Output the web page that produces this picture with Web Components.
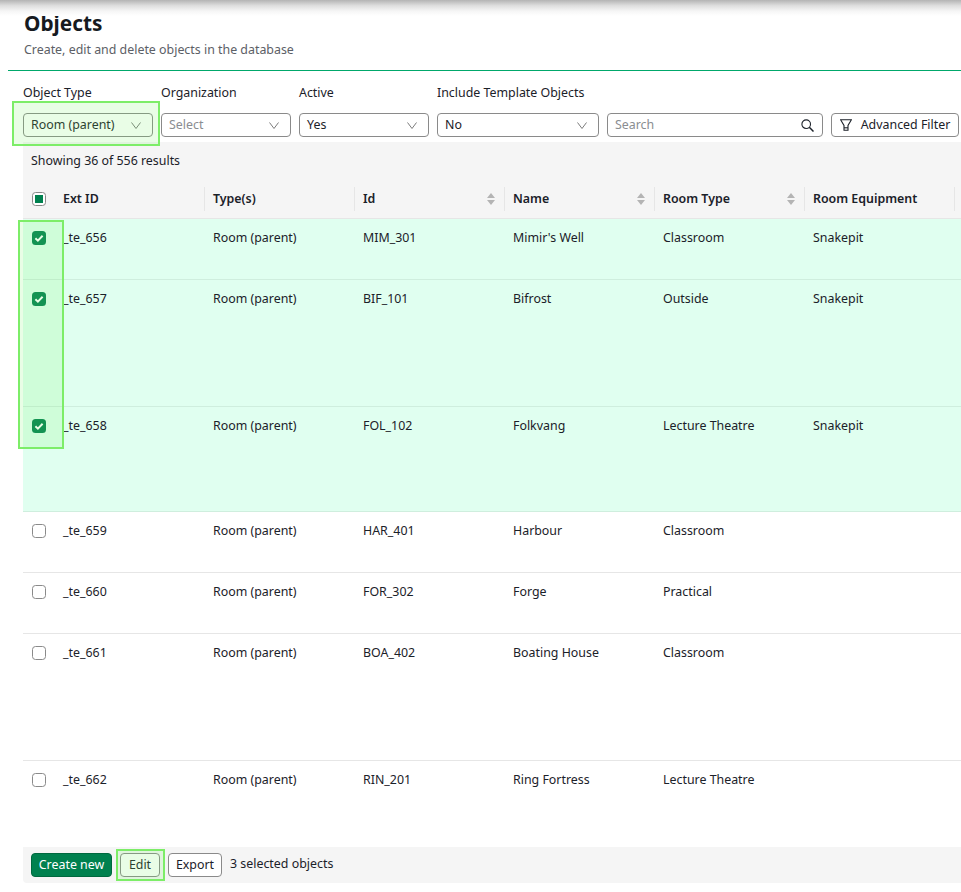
<!DOCTYPE html>
<html>
<head>
<meta charset="utf-8">
<title>Objects</title>
<style>
  html, body { margin: 0; padding: 0; background: #fff; }
  body { width: 961px; height: 892px; overflow: hidden; font: 12.4px/18px "Noto Sans", sans-serif; color: #1b2129; }
</style>
</head>
<body>
<objects-page></objects-page>
<script>
const chevron = `<svg width="10" height="7" viewBox="0 0 10 7" fill="none"><path d="M.5 .5l4.5 6 4.5-6" stroke="#7d7d7d" stroke-width="1"/></svg>`;

class PageHeader extends HTMLElement {
  constructor() {
    super();
    this.attachShadow({mode: 'open'});
    this.shadowRoot.innerHTML = `
      <style>
        :host { display: block; margin-left: 8px; height: 71px; box-sizing: border-box; border-bottom: 1px solid #00a86b; padding: 8px 0 0 16px; }
        h1 { margin: 0; font-size: 20.8px; line-height: 30px; font-weight: 700; color: #161a1f; }
        p { margin: 3px 0 0; line-height: 18px; color: #5c6066; }
      </style>
      <h1><slot name="title"></slot></h1>
      <p><slot name="sub"></slot></p>`;
  }
}
customElements.define('page-header', PageHeader);

class FilterSelect extends HTMLElement {
  constructor() {
    super();
    this.attachShadow({mode: 'open'});
  }
  connectedCallback() {
    const label = this.getAttribute('label');
    const placeholder = this.hasAttribute('placeholder');
    this.shadowRoot.innerHTML = `
      <style>
        :host { display: block; flex: none; width: var(--w, 130px); }
        label { display: block; height: 18px; line-height: 18px; margin-bottom: 11px; white-space: nowrap; }
        .box { height: 24px; box-sizing: border-box; border: 1px solid #8a8a8a; border-radius: 4px; background: #fff; display: flex; align-items: center; justify-content: space-between; padding: 0 7px; color: ${placeholder ? '#8a8d91' : '#1b2129'}; }
        svg { flex: none; margin-right: 4px; }
      </style>
      <label>${label}</label>
      <div class="box"><span><slot></slot></span>${chevron}</div>`;
  }
}
customElements.define('filter-select', FilterSelect);

class FilterSearch extends HTMLElement {
  constructor() {
    super();
    this.attachShadow({mode: 'open'});
    this.shadowRoot.innerHTML = `
      <style>
        :host { display: block; flex: none; width: 216px; height: 24px; box-sizing: border-box; border: 1px solid #8a8a8a; border-radius: 4px; }
        div { display: flex; height: 100%; align-items: center; justify-content: space-between; padding: 0 8px 0 7px; color: #8a8d91; }
      </style>
      <div><span>Search</span>
        <svg width="13" height="13" viewBox="0 0 13 13" fill="none" stroke="#1b2129" stroke-width="1.1"><circle cx="5.2" cy="5.2" r="4.3"/><path d="M8.3 8.3l4.2 4.2" stroke-width="1.5"/></svg>
      </div>`;
  }
}
customElements.define('filter-search', FilterSearch);

class UiButton extends HTMLElement {
  constructor() {
    super();
    this.attachShadow({mode: 'open'});
  }
  connectedCallback() {
    const kind = this.getAttribute('kind') || 'plain';
    const look = {
      primary: 'background:#00814f;border-color:#00693f;color:#fff;',
      plain: 'background:#fff;border-color:#8a8a8a;color:#1b2129;'
    }[kind];
    this.shadowRoot.innerHTML = `
      <style>
        :host { display: inline-block; flex: none; }
        div { display: flex; align-items: center; justify-content: center; gap: 9px; height: 24px; box-sizing: border-box; padding: 0 6px; border: 1px solid; border-radius: 4px; white-space: nowrap; ${look} }
      </style>
      <div><slot name="icon"></slot><slot></slot></div>`;
  }
}
customElements.define('ui-button', UiButton);

class ObjectsTable extends HTMLElement {
  constructor() {
    super();
    this.attachShadow({mode: 'open'});
  }
  connectedCallback() {
    const sort = `<svg class="sort" width="10" height="14" viewBox="0 0 10 14"><path d="M5 1l4 5H1zM5 13l4-5H1z" fill="#b4b4b4"/></svg>`;
    const tick = `<svg width="14" height="14" viewBox="0 0 14 14" fill="none"><rect width="14" height="14" rx="3.5" fill="#00814f"/><path d="M3.4 7.2l2.5 2.4 4.7-4.8" stroke="#fff" stroke-width="2"/></svg>`;
    const cols = [['Ext ID', 0], ['Type(s)', 0], ['Id', 1], ['Name', 1], ['Room Type', 1], ['Room Equipment', 0]];
    const rows = [
      [61, 1, '_te_656', 'MIM_301', "Mimir's Well", 'Classroom', 'Snakepit'],
      [127, 1, '_te_657', 'BIF_101', 'Bifrost', 'Outside', 'Snakepit'],
      [105, 1, '_te_658', 'FOL_102', 'Folkvang', 'Lecture Theatre', 'Snakepit'],
      [61, 0, '_te_659', 'HAR_401', 'Harbour', 'Classroom', ''],
      [61, 0, '_te_660', 'FOR_302', 'Forge', 'Practical', ''],
      [127, 0, '_te_661', 'BOA_402', 'Boating House', 'Classroom', ''],
      [86, 0, '_te_662', 'RIN_201', 'Ring Fortress', 'Lecture Theatre', '']
    ];
    const head = cols.map(([name, sortable]) => `<div class="th"><span>${name}</span>${sortable ? sort : ''}</div>`).join('');
    const body = rows.map(([h, on, ext, id, name, type, equip], i) => `
      <div class="row ${on ? 'on' : ''} ${i == rows.length - 1 ? 'last' : ''}" style="height:${h}px">
        <div class="chk">${on ? tick : '<span class="empty"></span>'}</div>
        <div class="td">${ext}</div><div class="td">Room (parent)</div><div class="td">${id}</div>
        <div class="td">${name}</div><div class="td">${type}</div><div class="td">${equip}</div>
      </div>`).join('');
    this.shadowRoot.innerHTML = `
      <style>
        :host { display: block; background: #fff; }
        .info { background: #f5f5f5; height: 37px; padding: 10px 0 0 8px; box-sizing: border-box; }
        .head, .row { display: grid; grid-template-columns: 32px repeat(6, 150px) 1fr; box-sizing: border-box; }
        .head { background: #f5f5f5; height: 40px; border-bottom: 1px solid #e6e6e6; align-items: center; }
        .th { height: 24px; display: flex; align-items: center; justify-content: space-between; padding: 0 8px; font-weight: 600; border-right: 1px solid #e6e6e6; box-sizing: border-box; }
        .row { border-bottom: 1px solid #e6e6e6; }
        .row.last { border-bottom: 0; }
        .row.on { background: #e0fff0; border-bottom-color: #cfeede; }
        .chk { padding: 12px 0 0 9px; line-height: 0; }
        .td { padding: 10px 8px 0; white-space: nowrap; }
        .empty { display: block; width: 14px; height: 14px; box-sizing: border-box; border: 1px solid #8a8a8a; border-radius: 3.5px; background: #fff; }
        .all { display: flex; width: 14px; height: 14px; box-sizing: border-box; border: 1px solid #8a8a8a; border-radius: 3.5px; margin-left: 9px; background: #fff; align-items: center; justify-content: center; }
        .all i { display: block; width: 8px; height: 8px; background: #00814f; }
      </style>
      <div class="info">Showing 36 of 556 results</div>
      <div class="head"><div><span class="all"><i></i></span></div>${head}<div></div></div>
      ${body}`;
  }
}
customElements.define('objects-table', ObjectsTable);

class MarkBox extends HTMLElement {
  constructor() {
    super();
    this.attachShadow({mode: 'open'});
    this.shadowRoot.innerHTML = `
      <style>
        :host { position: absolute; box-sizing: border-box; border: 2px solid #7ded68; background: rgba(120, 240, 100, 0.16); pointer-events: none; }
      </style>`;
  }
}
customElements.define('mark-box', MarkBox);

class ObjectsPage extends HTMLElement {
  constructor() {
    super();
    this.attachShadow({mode: 'open'});
    this.shadowRoot.innerHTML = `
      <style>
        :host { display: block; position: relative; width: 961px; height: 892px; overflow: hidden; }
        .topshade { position: absolute; left: 0; right: 0; top: 0; height: 16px; background: linear-gradient(#b4b4b4, #dedede 35%, #f6f6f6 70%, #fff); }
        .filters { display: flex; margin: 13px 0 0 23px; align-items: flex-end; gap: 8px; white-space: nowrap; }
        .adv { width: 128px; }
        .main { margin: 5px 0 0 23px; }
        .foot { display: flex; align-items: center; gap: 8px; background: #f5f5f5; height: 36px; padding: 0 8px; border-radius: 0 0 0 4px; white-space: nowrap; }
        .foot span { position: relative; top: -1px; }
        .create { width: 81px; }
        .edit { width: 40px; }
        .export { width: 54px; }
      </style>
      <div class="topshade"></div>
      <page-header><span slot="title">Objects</span><span slot="sub">Create, edit and delete objects in the database</span></page-header>
      <div class="filters">
        <filter-select label="Object Type" style="--w:130px">Room (parent)</filter-select>
        <filter-select label="Organization" placeholder style="--w:130px">Select</filter-select>
        <filter-select label="Active" style="--w:130px">Yes</filter-select>
        <filter-select label="Include Template Objects" style="--w:162px">No</filter-select>
        <filter-search></filter-search>
        <ui-button class="adv"><svg slot="icon" width="12" height="12" viewBox="0 0 12 12" fill="none" stroke="#1b2129" stroke-width="1.1" style="display:block"><path d="M.6 .8h10.8L8 6.4v4.8H4V6.4z"/><path d="M4 8.8h4"/></svg>Advanced Filter</ui-button>
      </div>
      <div class="main">
        <objects-table></objects-table>
        <div class="foot">
          <ui-button class="create" kind="primary">Create new</ui-button>
          <ui-button class="edit">Edit</ui-button>
          <ui-button class="export">Export</ui-button>
          <span>3 selected objects</span>
        </div>
      </div>
      <mark-box style="left:12px;top:101px;width:148px;height:45px"></mark-box>
      <mark-box style="left:18px;top:220px;width:46px;height:229px"></mark-box>
      <mark-box style="left:116px;top:849px;width:49px;height:32px"></mark-box>`;
  }
}
customElements.define('objects-page', ObjectsPage);
</script>
</body>
</html>
